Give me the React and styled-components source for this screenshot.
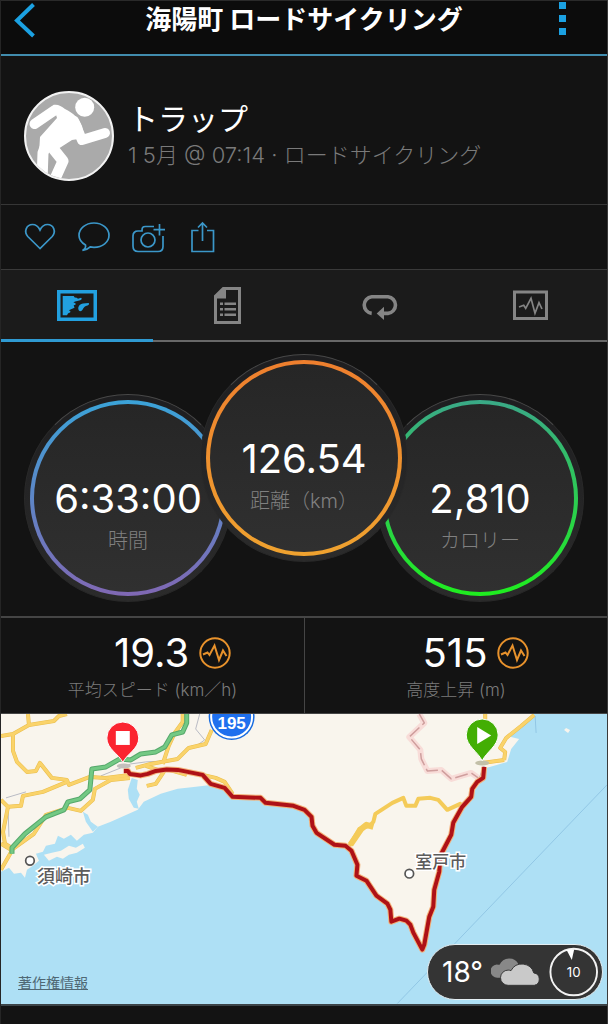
import { useState } from "react";
import styled, { createGlobalStyle } from "styled-components";

const GlobalStyle = createGlobalStyle`
  * {
    box-sizing: border-box;
  }

  body {
    margin: 0;
    background-color: #131313;
    color: #fff;
    font-family: "Inter", "Noto Sans CJK JP", sans-serif;
  }

  button {
    border: 0;
    padding: 0;
    background: none;
    color: inherit;
    cursor: pointer;
  }

  svg {
    display: block;
  }
`;

const StyledPage = styled.div`
  border-left: 1px solid #252525;
  border-right: 1px solid #3a3a3a;
  background-color: #131313;
`;

const StyledHeader = styled.header`
  display: grid;
  grid-template-columns: 90px 1fr 90px;
  align-items: center;
  height: 56px;
  padding-bottom: 16px;
  background-color: #0c0c0c;
  border-top: 1px solid #2a2a2a;
  border-bottom: 2px solid #418cad;
`;

const StyledTitle = styled.h1`
  margin: 0;
  font-size: 26px;
  line-height: 36px;
  font-weight: 700;
  text-align: center;
  white-space: nowrap;
`;

const StyledHeaderButton = styled.button`
  display: flex;
  height: 36px;
  padding: 0 12px;
  align-items: center;
  color: #1ba1e2;
  justify-content: ${(props) => (props.$right ? "center" : "flex-start")};
`;

const StyledProfile = styled.section`
  display: flex;
  align-items: center;
  gap: 14px;
  height: 149px;
  padding: 12px 24px 0 23px;
  border-bottom: 1px solid #363636;
`;

const StyledAvatar = styled.div`
  flex: none;
  width: 90px;
  height: 90px;
  border: 2px solid #f2f2f2;
  border-radius: 50%;
  overflow: hidden;
  background-color: #aaa;
`;

const StyledName = styled.h2`
  margin: 0;
  font-size: 30px;
  line-height: 38px;
  font-weight: 400;
`;

const StyledMeta = styled.p`
  margin: 0;
  font-size: 22px;
  line-height: 34px;
  font-weight: 300;
  color: #7a7a7a;
`;

const StyledActions = styled.div`
  display: flex;
  align-items: center;
  gap: 22px;
  height: 65px;
  padding: 0 23px;
  border-bottom: 1px solid #3a3a3a;
  color: #3b97c9;
`;

const StyledTabs = styled.nav`
  display: grid;
  grid-template-columns: repeat(4, 1fr);
  height: 72px;
  background-color: #1b1b1b;
`;

const StyledTab = styled.button`
  display: flex;
  align-items: center;
  justify-content: center;
  color: ${(props) => (props.$active ? "#22a0e0" : "#858585")};
  border-bottom: ${(props) =>
    props.$active ? "3px solid #2f9ad2" : "2px solid #686868"};
`;

const StyledGauges = styled.section`
  display: flex;
  justify-content: center;
  padding: 12px 0 14px;
`;

/* rim of the dial, the coloured ring sits inside it */
const StyledGauge = styled.div`
  position: relative;
  flex: none;
  width: 208px;
  height: 208px;
  padding: 5px;
  border-radius: 50%;
  border: 1px solid #292929;
  border-top-color: #484848;
  background: linear-gradient(#1e1e20, #2b2b2b);
  margin: ${(props) => (props.$center ? "0 -16px 40px" : "40px -16px 0")};
  z-index: ${(props) => (props.$center ? 1 : 0)};
`;

const StyledRing = styled.div`
  height: 100%;
  padding: 4px;
  border-radius: 50%;
  background: linear-gradient(${(props) => props.$from}, ${(props) => props.$to});
`;

const StyledDial = styled.div`
  display: flex;
  flex-direction: column;
  align-items: center;
  height: 100%;
  padding-top: 67px;
  border-radius: 50%;
  background: linear-gradient(#262626, #303030);
`;

const StyledGaugeValue = styled.div`
  font-size: 40px;
  line-height: 56px;
`;

const StyledGaugeLabel = styled.div`
  font-size: 20px;
  line-height: 28px;
  font-weight: 300;
  color: #808080;
`;

const StyledStats = styled.section`
  display: grid;
  grid-template-columns: 1fr 1fr;
  border-top: 2px solid #454545;
  border-bottom: 1px solid #454545;
`;

const StyledStat = styled.div`
  display: flex;
  flex-direction: column;
  align-items: center;
  height: 95px;
  padding-top: 11px;

  & + & {
    border-left: 1px solid #454545;
  }
`;

const StyledStatValue = styled.div`
  display: flex;
  align-items: center;
  gap: 10px;
  font-size: 40px;
  line-height: 48px;
  padding-left: 40px;
`;

const StyledStatLabel = styled.div`
  font-size: 17px;
  line-height: 26px;
  font-weight: 300;
  color: #7c7c7c;
`;

const StyledMap = styled.section`
  position: relative;
  border-bottom: 2px solid #3c4448;
  background-color: #aee0f5;

  & > svg {
    width: 100%;
    height: auto;
  }
`;

const StyledLegal = styled.a`
  position: absolute;
  left: 17px;
  bottom: 10px;
  font-size: 14px;
  line-height: 22px;
  color: #4f6874;
`;

const StyledWeather = styled.div`
  position: absolute;
  right: 4px;
  bottom: 4px;
  display: flex;
  align-items: center;
  gap: 8px;
  width: 176px;
  height: 56px;
  padding: 0 4px 0 14px;
  border: 1px solid #e4eef2;
  border-radius: 28px;
  background-color: #343434;
  font-size: 28px;
`;

const StyledFooter = styled.footer`
  height: 18px;
`;

const line = { fill: "none", stroke: "currentColor", strokeWidth: 1.7 };
const wave = "8,22 12.7,20.3 14.7,23.3 20,13.3 24,28.3 28,17.7 31,24";

const actions = [
  {
    label: "いいね",
    icon: <path {...line} d="M16 27.500 3.800 15.500C-.5 10.500 2.500 3.500 8.500 3.500c4 0 6 2.500 7.500 5.500 1.500-3 3.500-5.500 7.500-5.500 6 0 9 7 4.700 12Z" />,
  },
  {
    label: "コメント",
    icon: <path {...line} d="M4.500 29.500C7 28 8 26 7.500 24 3 21.500 1 18 1 14.300 1 7.500 7.500 2 16 2s15 5.500 15 12.300-6.500 12-15 12c-1.500 0-2.500-.1-3.800-.4-2 2-4.700 3.200-7.700 3.600Z" />,
  },
  {
    label: "写真を追加",
    icon: (
      <g {...line}>
        <path d="M22 5.500H13.500c-3 0-3.500 1-3.500 4.500H6c-3 0-5 2-5 5v10c0 3.500 2 5.500 5 5.500h20c3 0 5-2 5-5V15M27.500 3v11.500M21.500 8.700H33" />
        <circle cx="16" cy="19" r="7" />
      </g>
    ),
  },
  {
    label: "共有",
    icon: <path {...line} d="M12.500 9.500H6v21h21.500v-21H21M16.500 20V2M12 6.500 16.500 2 21 6.500" />,
  },
];

const tabs = [
  {
    label: "地図",
    icon: (
      <g fill="currentColor">
        <path fillRule="evenodd" d="M0 5h40v31H0ZM3.500 8.500v24h33v-24Z" />
        <path d="M5.700 11h11l1 1.500 2 .2 1.300 1 3-1c1.200.5.800 2-.8 2.500l-5 1.200-1.800.8 2 1c.8 1-.2 2-1.700 2l.8 2.500-4 1.800-1.500.8 1.500 1.200c0 1.500-1.700 1-2.500 2l-1 1.800H5.700Z" />
        <path d="M21.300 22.500c.8-2.500 2.200-3.700 4.700-4l5.500-.4c1.200.6.500 2-1 2.400-2.500.5-3.500 1.500-5 4.300-1.200 2.500-4.800 1.700-4.200-2.300Z" />
      </g>
    ),
  },
  {
    label: "詳細",
    icon: (
      <g fill="currentColor">
        <path fillRule="evenodd" d="M14.700 2H33v37H6V10.500ZM18 5v8.500H9V36h21V5Z" />
        <path d="M12 17.500h3V20h-3Zm4.500 0H28V20H16.500ZM12 23h3v2.500h-3Zm4.500 0H28v2.500H16.500ZM12 28.500h3V31h-3Zm4.500 0H28V31H16.500Z" />
      </g>
    ),
  },
  {
    label: "ラップ",
    icon: (
      <g>
        <path {...line} strokeWidth="3.600" d="M11.700 28.400a8.400 8.400 0 0 1 0-16.700H28a8.400 8.400 0 0 1 0 16.700h-6" />
        <path fill="currentColor" d="M16.700 28.400 24 21.700V35Z" />
      </g>
    ),
  },
  {
    label: "グラフ",
    icon: (
      <g {...line}>
        <rect x="3.500" y="7" width="32" height="26.500" strokeWidth="3" />
        <polyline points={wave} />
      </g>
    ),
  },
];

const gauges = [
  { value: "6:33:00", label: "時間", from: "#3ba3d8", to: "#8068b4" },
  { value: "126.54", label: "距離（km）", from: "#ee7f2e", to: "#efa22f", center: true },
  { value: "2,810", label: "カロリー", from: "#3aa987", to: "#1fee1f" },
];

const stats = [
  { value: "19.3", label: "平均スピード (km／h)" },
  { value: "515", label: "高度上昇 (m)" },
];

const Runner = () => (
  <svg width="86" height="86" viewBox="2 2 86 86" aria-hidden="true">
    <g fill="none" stroke="#fff" strokeLinecap="round" strokeLinejoin="round">
      <path strokeWidth="10" d="M10.500 33 31 19M50 30l8 19 23-7" />
      <path strokeWidth="11" d="M25 46 19 62l-1 28M27 55l12 15-9 20" />
    </g>
    <path fill="#fff" d="M29 14c5-1 8 1 12 4 8 4 14 9 17 17l3 12-13 2-14 9-19 5 1-17 17-19Z" />
    <circle cx="60.700" cy="16.300" r="9.500" fill="#fff" />
  </svg>
);

const WaveBadge = () => (
  <svg width="32" height="32" viewBox="0 0 32 32" fill="none" stroke="#e8922c" strokeWidth="2" aria-hidden="true">
    <circle cx="16" cy="16" r="14.700" />
    <polyline points="4,17.500 8.500,15.500 10.500,18 15.500,8.500 20,23 24,13.500 27.500,19" />
  </svg>
);

const route =
  "M123 57H127L129 60 140 61.500 147 60 155 57 166 55.500 177 56 202 61 210 70 224 74 232 83 260 84 265 89 293 92 304 96 311 103 312 112 316 119 334 131 345 132 351 137 357 151 356 162 366 167 376 182 387 190 390 196 391 208 399 205 406 207 410 211 413 219 422 236 424 231 429 203 433 193 434 176 439 158 440 142 451 121 453 109 462 93 471 83 472 75 477 68 483 64 484 53";

const yellowRoads = [
  "M27 0 28 11 12 20 0 22",
  "M28 11 53 7 58 2 66 0",
  "M12 20V37L16 48 26 58 35 57 39 49 51 64 66 66 68 71 89 63 105 64 129 61",
  "M66 68 42 78 22 82 20 92 7 93 0 86",
  "M7 93 2 118 4 130 12 135 M0 130 10 136",
  "M129 64 110 66 94 75 92 86 80 97 67 94",
  "M67 94 45 101 33 120 12 135 0 156",
  "M211 16 205 30 188 34 177 45 150 50 135 54",
  "M182 0V8L174 19 168 32 162 50",
  "M145 52 163 58 155 70 146 72 M165 55 186 61",
  "M202 61 215 64 224 68 232 80",
  "M504 46 482 49 M534 1 521 12 506 24 500 34 505 38 504 46",
  "M485 0V8",
];

const MapDrawing = () => (
  <svg viewBox="0 0 607 290" role="img" aria-label="ルート">
    <rect width="607" height="290" fill="#aee0f5" />
    <path
      fill="#f9f5ed"
      d="M0 0H534L522 12 507 22 519 25 511 35 507 48 486 54 484 64 472 80 453 110 440 142 434 175 422 236 411 213 400 205 391 208 387 190 366 168 356 163 356 146 347 134 334 131 316 119 311 103 304 96 293 92 267 90 260 85 232 84 224 75 210 71 193 73 177 75 160 80 143 88 137 96 110 108 97 113 92 119 83 121 76 127 70 121 63 125 57 122 54 130 45 132 42 138 35 140 38 147 32 152 26 156 24 164 20 159 13 160 8 154 0 158Z"
    />
    <path
      fill="#f9f5ed"
      d="M43 141 51 139 60 137 68 132 75 134 82 130 84 134 76 139 68 141 62 145 56 143 48 147Z M566 14 570 16 568 19 564 16Z"
    />
    <path fill="#aee0f5" d="M131 64 137 66 136 75 139 81 136 88 138 95 133 94 128 85 127 76Z M82 98 87 101 90 108 97 113 92 118 85 108Z" />
    <path fill="none" stroke="#92c7e5" d="M607 71 397 290M535 2l1 17" />
    <path fill="none" stroke="#b9bbc4" d="M199 0 195 15 204 26 194 33M5 84l20-6M7 93l1 30M100 62l30-12 15-2 20-1M477 68l7-16" />

    <g fill="none" strokeLinejoin="round">
      <path
        stroke="#f8dcd8"
        strokeWidth="6"
        d="M419 0 424 9 409 23 420 36 421 45 427 57 441 56 451 65 471 59 478 64"
      />
      <path
        stroke="#cf9e9d"
        strokeWidth="1.500"
        strokeDasharray="13 4"
        d="M419 0 424 9 409 23 420 36 421 45 427 57 441 56 451 65 471 59 478 64"
      />
      {yellowRoads.map((d) => (
        <path key={d} d={d} stroke="#e9bd4c" strokeWidth="4" />
      ))}
      {yellowRoads.map((d) => (
        <path key={d} d={d} stroke="#fad36a" strokeWidth="3" />
      ))}
      <path
        stroke="#f4cb59"
        strokeWidth="4"
        d="M349 132 359 115 369 112 373 108 375 100 392 89 403 84 406 92 415 92 418 85 430 84 438 86 447 96 460 90 463 94"
      />
      <path stroke="#f4cb59" strokeWidth="6" d="M350 131 361 115 366 111 373 113" />
      <path
        stroke="#56a86c"
        strokeWidth="5"
        d="M11 140V134L24 120 45 103 63 96 67 88 79 85 89 76 91 55 105 53 119 45 130 46 140 40 155 38 164 33 171 21 182 18 186 9V0"
      />
      <path
        stroke="#73c984"
        strokeWidth="3"
        d="M11 140V134L24 120 45 103 63 96 67 88 79 85 89 76 91 55 105 53 119 45 130 46 140 40 155 38 164 33 171 21 182 18 186 9V0"
      />
      <path d={route} stroke="#f3b078" strokeWidth="6" />
      <path d={route} stroke="#ae1117" strokeWidth="4" />
    </g>

    <g fill="#fff" stroke="#555" strokeWidth="1.700">
      <circle cx="29" cy="147" r="4.300" />
      <circle cx="409" cy="160" r="4.300" />
    </g>
    <g fill="#5c5c5c" stroke="#fff" strokeWidth="3" paintOrder="stroke" fontSize="18" fontWeight="500">
      <text x="36" y="169">須崎市</text>
      <text x="415" y="154" fontSize="17">室戸市</text>
    </g>

    <circle cx="231" cy="3" r="23" fill="#176be0" />
    <circle cx="231" cy="3" r="20.500" fill="#1f70ee" stroke="#fff" strokeWidth="2" />
    <text x="231" y="15" textAnchor="middle" fill="#fff" fontSize="17" fontWeight="700" fontFamily="Liberation Sans, sans-serif">
      195
    </text>

    <ellipse cx="123" cy="52" rx="7" ry="2.500" fill="#c3c0bc" />
    <path fill="#fb2430" stroke="#fff" d="M122 48.500C118 40 106 35 106 24a16 16 0 0 1 32 0c0 11-12 16-16 24.500Z" />
    <path fill="#fff" d="M115 17h14v14h-14Z" />
    <ellipse cx="482" cy="49" rx="7" ry="2.500" fill="#c3c0a8" />
    <path fill="#43ae04" stroke="#fff" d="M482 47C478 38 466 32 466 21a16 16 0 0 1 32 0c0 11-12 17-16 26Z" />
    <path fill="#fff" d="M477 13v17l14-8.500Z" />
  </svg>
);

const Clouds = () => (
  <svg width="52" height="30" viewBox="0 0 52 30" aria-hidden="true">
    <path fill="#888" d="M7 21a7 7 0 0 1-1-14c1 0 2 .2 3 .5a11 11 0 0 1 20-.5L23 21Z" />
    <path
      fill="#c9c9c9"
      stroke="#343434"
      d="M18 29a8 8 0 0 1 0-16c1 0 2 .2 3 .6a13 13 0 0 1 24 2.400 6.600 6.600 0 0 1 .5 13Z"
    />
  </svg>
);

const Wind = () => (
  <svg width="52" height="52" viewBox="0 0 52 52" role="img" aria-label="風">
    <circle cx="26" cy="26" r="24.500" fill="none" stroke="#f2f2f2" strokeWidth="2" />
    <path fill="#fff" d="M18.500 3 22 2.300 26.500 2 24 13.500Z" />
    <text x="26" y="31" textAnchor="middle" fill="#fff" fontSize="14">
      10
    </text>
  </svg>
);

export default function App() {
  const [activeTab, setActiveTab] = useState(0);

  return (
    <>
      <GlobalStyle />
      <StyledPage>
        <StyledHeader>
          <StyledHeaderButton aria-label="戻る">
            <svg width="22" height="36" viewBox="0 0 22 36">
              <path d="M20.500 2.500 4 18.500l16.500 15.500" fill="none" stroke="currentColor" strokeWidth="4" />
            </svg>
          </StyledHeaderButton>
          <StyledTitle>海陽町 ロードサイクリング</StyledTitle>
          <StyledHeaderButton $right aria-label="メニュー">
            <svg width="7" height="36" viewBox="0 0 7 36">
              <path d="M0 0h7v7H0Zm0 13h7v7H0Zm0 13h7v7H0Z" fill="currentColor" />
            </svg>
          </StyledHeaderButton>
        </StyledHeader>

        <StyledProfile>
          <StyledAvatar>
            <Runner />
          </StyledAvatar>
          <div>
            <StyledName>トラップ</StyledName>
            <StyledMeta>1 5月 @ 07:14 · ロードサイクリング</StyledMeta>
          </div>
        </StyledProfile>

        <StyledActions>
          {actions.map((a) => (
            <button key={a.label} aria-label={a.label}>
              <svg width="32" height="32" viewBox="0 0 32 32" overflow="visible">
                {a.icon}
              </svg>
            </button>
          ))}
        </StyledActions>

        <StyledTabs>
          {tabs.map((t, i) => (
            <StyledTab
              key={t.label}
              aria-label={t.label}
              $active={activeTab === i}
              onClick={() => {
                setActiveTab(i);
              }}
            >
              <svg width="40" height="40" viewBox="0 0 40 40">
                {t.icon}
              </svg>
            </StyledTab>
          ))}
        </StyledTabs>

        <StyledGauges>
          {gauges.map((g) => (
            <StyledGauge key={g.label} $center={g.center}>
              <StyledRing $from={g.from} $to={g.to}>
                <StyledDial>
                  <StyledGaugeValue>{g.value}</StyledGaugeValue>
                  <StyledGaugeLabel>{g.label}</StyledGaugeLabel>
                </StyledDial>
              </StyledRing>
            </StyledGauge>
          ))}
        </StyledGauges>

        <StyledStats>
          {stats.map((s) => (
            <StyledStat key={s.label}>
              <StyledStatValue>
                {s.value}
                <WaveBadge />
              </StyledStatValue>
              <StyledStatLabel>{s.label}</StyledStatLabel>
            </StyledStat>
          ))}
        </StyledStats>

        <StyledMap>
          <MapDrawing />
          <StyledLegal href="#legal">著作権情報</StyledLegal>
          <StyledWeather>
            18°
            <Clouds />
            <Wind />
          </StyledWeather>
        </StyledMap>
        <StyledFooter />
      </StyledPage>
    </>
  );
}
